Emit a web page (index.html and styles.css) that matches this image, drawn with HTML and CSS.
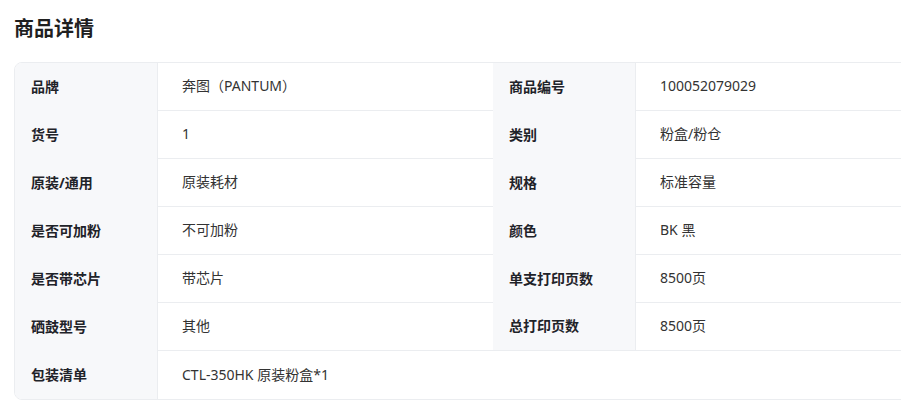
FILE: index.html
```html
<!DOCTYPE html>
<html lang="zh">
<head>
<meta charset="utf-8">
<link rel="stylesheet" href="styles.css">
</head>
<body>
<div class="page">
  <h2 class="title">商品详情</h2>
  <div class="spec">
    <div class="lbl">品牌</div><div class="val">奔图（PANTUM）</div>
    <div class="lbl lbl2">商品编号</div><div class="val">100052079029</div>

    <div class="lbl">货号</div><div class="val">1</div>
    <div class="lbl lbl2">类别</div><div class="val">粉盒/粉仓</div>

    <div class="lbl">原装/通用</div><div class="val">原装耗材</div>
    <div class="lbl lbl2">规格</div><div class="val">标准容量</div>

    <div class="lbl">是否可加粉</div><div class="val">不可加粉</div>
    <div class="lbl lbl2">颜色</div><div class="val">BK 黑</div>

    <div class="lbl">是否带芯片</div><div class="val">带芯片</div>
    <div class="lbl lbl2">单支打印页数</div><div class="val">8500页</div>

    <div class="lbl">硒鼓型号</div><div class="val last6">其他</div>
    <div class="lbl lbl2 last6">总打印页数</div><div class="val last6">8500页</div>

    <div class="lbl">包装清单</div><div class="val wide">CTL-350HK 原装粉盒*1</div>
  </div>
</div>
</body>
</html>
```
FILE: styles.css
```css
html, body {
  margin: 0;
  padding: 0;
  background: #fff;
  overflow: hidden;
}
body {
  font-family: "Noto Sans", "Noto Sans CJK SC", sans-serif;
  color: #1f2329;
}
.page {
  padding: 13px 0 0 14px;
}
.title {
  margin: 0;
  font-size: 20px;
  line-height: 32px;
  font-weight: 700;
  color: #1f1f1f;
}
.spec {
  margin-top: 17px;
  width: 1000px;
  display: grid;
  grid-template-columns: 143px 335px 143px 1fr;
  border: 1px solid #ebedf0;
  border-radius: 8px;
  overflow: hidden;
  font-size: 14px;
}
.lbl {
  background: #f7f8fa;
  border-right: 1px solid #ebedf0;
  height: 48px;
  box-sizing: border-box;
  padding-bottom: 2px;
  display: flex;
  align-items: center;
  padding-left: 16px;
  font-weight: 700;
  color: #1f2329;
}
.val {
  height: 48px;
  box-sizing: border-box;
  padding-bottom: 3px;
  border-bottom: 1px solid #ebedf0;
  display: flex;
  align-items: center;
  padding-left: 24px;
  color: #333;
}
.lbl2.last6 {
  border-bottom: 1px solid #ebedf0;
  padding-bottom: 3px;
}
.wide {
  grid-column: span 3;
  border-bottom: none;
  padding-bottom: 2px;
}
```
